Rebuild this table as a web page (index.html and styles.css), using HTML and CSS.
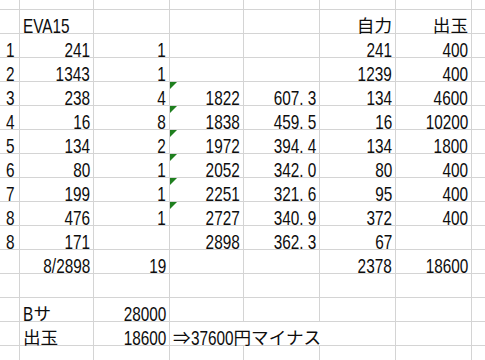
FILE: index.html
```html
<!DOCTYPE html>
<html lang="ja">
<head>
<meta charset="utf-8">
<title>EVA15</title>
<link rel="stylesheet" href="styles.css">
</head>
<body>
<div class="sheet">
  <div class="row"><div></div><div></div><div></div><div></div><div></div><div></div><div></div><div></div></div>
  <div class="row"><div></div><div class="t"><span class="v">EVA15</span></div><div></div><div></div><div></div><div class="n"><span class="jp">自力</span></div><div class="n"><span class="jp">出玉</span></div><div></div></div>
  <div class="row"><div class="h"><span class="v">1</span></div><div class="n"><span class="v">241</span></div><div class="n"><span class="v">1</span></div><div></div><div></div><div class="n"><span class="v">241</span></div><div class="n"><span class="v">400</span></div><div></div></div>
  <div class="row"><div class="h"><span class="v">2</span></div><div class="n"><span class="v">1343</span></div><div class="n"><span class="v">1</span></div><div></div><div></div><div class="n"><span class="v">1239</span></div><div class="n"><span class="v">400</span></div><div></div></div>
  <div class="row"><div class="h"><span class="v">3</span></div><div class="n"><span class="v">238</span></div><div class="n"><span class="v">4</span></div><div class="n tri"><span class="v">1822</span></div><div class="n"><span class="v">607<span class="dot">.</span>3</span></div><div class="n"><span class="v">134</span></div><div class="n"><span class="v">4600</span></div><div></div></div>
  <div class="row"><div class="h"><span class="v">4</span></div><div class="n"><span class="v">16</span></div><div class="n"><span class="v">8</span></div><div class="n tri"><span class="v">1838</span></div><div class="n"><span class="v">459<span class="dot">.</span>5</span></div><div class="n"><span class="v">16</span></div><div class="n"><span class="v">10200</span></div><div></div></div>
  <div class="row"><div class="h"><span class="v">5</span></div><div class="n"><span class="v">134</span></div><div class="n"><span class="v">2</span></div><div class="n tri"><span class="v">1972</span></div><div class="n"><span class="v">394<span class="dot">.</span>4</span></div><div class="n"><span class="v">134</span></div><div class="n"><span class="v">1800</span></div><div></div></div>
  <div class="row"><div class="h"><span class="v">6</span></div><div class="n"><span class="v">80</span></div><div class="n"><span class="v">1</span></div><div class="n tri"><span class="v">2052</span></div><div class="n"><span class="v">342<span class="dot">.</span>0</span></div><div class="n"><span class="v">80</span></div><div class="n"><span class="v">400</span></div><div></div></div>
  <div class="row"><div class="h"><span class="v">7</span></div><div class="n"><span class="v">199</span></div><div class="n"><span class="v">1</span></div><div class="n tri"><span class="v">2251</span></div><div class="n"><span class="v">321<span class="dot">.</span>6</span></div><div class="n"><span class="v">95</span></div><div class="n"><span class="v">400</span></div><div></div></div>
  <div class="row"><div class="h"><span class="v">8</span></div><div class="n"><span class="v">476</span></div><div class="n"><span class="v">1</span></div><div class="n tri"><span class="v">2727</span></div><div class="n"><span class="v">340<span class="dot">.</span>9</span></div><div class="n"><span class="v">372</span></div><div class="n"><span class="v">400</span></div><div></div></div>
  <div class="row"><div class="h"><span class="v">8</span></div><div class="n"><span class="v">171</span></div><div></div><div class="n"><span class="v">2898</span></div><div class="n"><span class="v">362<span class="dot">.</span>3</span></div><div class="n"><span class="v">67</span></div><div></div><div></div></div>
  <div class="row"><div></div><div class="n"><span class="v">8/2898</span></div><div class="n"><span class="v">19</span></div><div></div><div></div><div class="n"><span class="v">2378</span></div><div class="n"><span class="v">18600</span></div><div></div></div>
  <div class="row"><div></div><div></div><div></div><div></div><div></div><div></div><div></div><div></div></div>
  <div class="row"><div></div><div class="t"><span class="v b">B</span><span class="jp">サ</span></div><div class="n"><span class="v">28000</span></div><div></div><div></div><div></div><div></div><div></div></div>
  <div class="row"><div></div><div class="t"><span class="jp">出玉</span></div><div class="n"><span class="v">18600</span></div><div class="t span3"><span class="jp">⇒</span><span class="v amt">37600</span><span class="jp">円マイナス</span></div><div></div><div></div></div>
  <div class="row"><div></div><div></div><div></div><div></div><div></div><div></div><div></div><div></div></div>
</div>
</body>
</html>
```

FILE: styles.css
```css
html, body {
  margin: 0;
  padding: 0;
  background: #ffffff;
}

body {
  width: 485px;
  height: 360px;
  overflow: hidden;
}

.sheet {
  display: grid;
  grid-template-columns: 19px 73px 75px 73px 75px 75px 75px 1fr;
  grid-template-rows: 9px repeat(14, 23px) 1fr;
  gap: 1px;
  height: 360px;
  background: #d4d4d4;
  font-family: "Liberation Sans", "Noto Sans CJK JP", sans-serif;
  font-size: 21px;
  color: #0d0d0d;
}

.row {
  display: contents;
}

.row > div {
  background: #ffffff;
  line-height: 14px;
  padding-top: 9px;
  white-space: nowrap;
  box-sizing: border-box;
  min-width: 0;
}

.row > .n {
  text-align: right;
  padding-right: 3px;
}

.row > .t {
  padding-left: 3px;
}

.row > .h {
  padding-left: 6px;
}

.span3 {
  grid-column: span 3;
}

/* narrow spreadsheet figures */
.v {
  display: inline-block;
  transform: scaleX(0.73);
  transform-origin: right center;
}

.t .v,
.h .v {
  transform-origin: left center;
}

.b {
  margin-right: -3.5px;
}

.amt {
  margin-right: -15.5px;
}

.jp {
  font-family: "Noto Sans CJK JP", sans-serif;
  font-size: 17.6px;
  line-height: 1px;
  vertical-align: 1px;
}

.dot {
  letter-spacing: 5.8px;
}

.tri {
  position: relative;
}

.tri::before {
  content: "";
  position: absolute;
  top: 0;
  left: 0;
  width: 0;
  height: 0;
  border-top: 7px solid #1f7f1f;
  border-right: 7px solid transparent;
}
```
